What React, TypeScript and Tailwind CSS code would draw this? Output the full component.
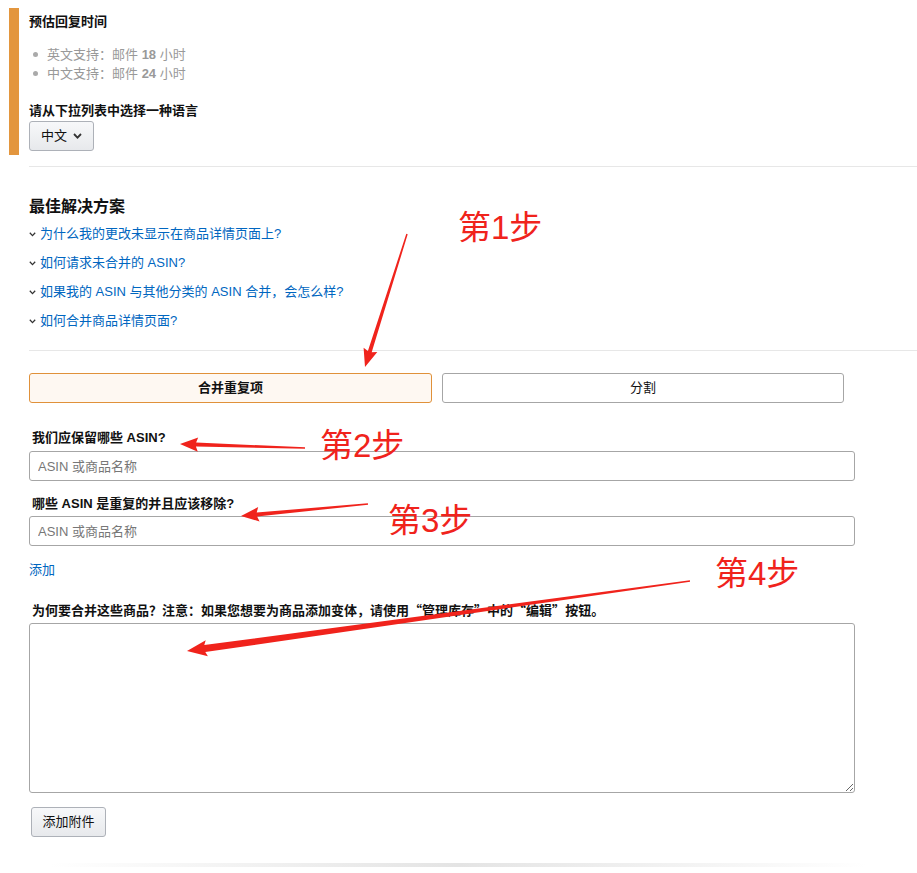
import React from "react"

const font = { fontFamily: '"Liberation Sans", "Noto Sans CJK SC", sans-serif' }
const cjk = { fontFamily: '"Noto Sans CJK SC", sans-serif' }

type Arrow = { x1: number; y1: number; x2: number; y2: number; w: number; head: number }

// tail (x1,y1) -> tip (x2,y2); shaft tapers from thin tail to w at the head
function arrowPoints({ x1, y1, x2, y2, w, head }: Arrow) {
  const dx = x2 - x1
  const dy = y2 - y1
  const len = Math.hypot(dx, dy)
  const ux = dx / len
  const uy = dy / len
  const nx = -uy
  const ny = ux
  const bx = x2 - ux * head
  const by = y2 - uy * head
  const hw = head * 0.45
  const pts = [
    [x1 + nx * 0.7, y1 + ny * 0.7],
    [bx + nx * (w / 2), by + ny * (w / 2)],
    [bx + nx * hw - ux * 2, by + ny * hw - uy * 2],
    [x2, y2],
    [bx - nx * hw - ux * 2, by - ny * hw - uy * 2],
    [bx - nx * (w / 2), by - ny * (w / 2)],
    [x1 - nx * 0.7, y1 - ny * 0.7],
  ]
  return pts.map((p) => `${p[0].toFixed(1)},${p[1].toFixed(1)}`).join(" ")
}

const arrows: Arrow[] = [
  { x1: 407, y1: 226, x2: 365, y2: 359, w: 4, head: 16 },
  { x1: 305, y1: 440, x2: 180, y2: 436, w: 4, head: 16 },
  { x1: 368, y1: 496, x2: 241, y2: 508, w: 4, head: 16 },
  { x1: 690, y1: 573, x2: 187, y2: 643, w: 7, head: 18 },
]

function LinkChevron() {
  return (
    <svg width="7" height="5" viewBox="0 0 7 5" className="mr-[4px] shrink-0">
      <path d="M0.8 0.8 L3.5 3.6 L6.2 0.8" fill="none" stroke="#333" strokeWidth="1.3" />
    </svg>
  )
}

const faq = [
  "为什么我的更改未显示在商品详情页面上?",
  "如何请求未合并的 ASIN?",
  "如果我的 ASIN 与其他分类的 ASIN 合并，会怎么样?",
  "如何合并商品详情页面?",
]

export default function App() {
  return (
    <div className="relative min-h-[873px] w-[917px] bg-white text-[13px] text-[#111]" style={font}>
      <div className="ml-[9px] mt-2 flex h-[147px] flex-col border-l-[10px] border-[#e3963e] pl-[10px] pt-[6px]">
        <h4 className="text-[13px] font-bold leading-4">预估回复时间</h4>
        <ul className="mt-[15px] text-[13px] leading-[19px] text-[#999]">
          <li className="flex items-center">
            <span className="ml-[4px] mr-[9px] inline-block h-[5px] w-[5px] rounded-full bg-[#aaa]" />
            英文支持：邮件&nbsp;<b>18</b>&nbsp;小时
          </li>
          <li className="flex items-center">
            <span className="ml-[4px] mr-[9px] inline-block h-[5px] w-[5px] rounded-full bg-[#aaa]" />
            中文支持：邮件&nbsp;<b>24</b>&nbsp;小时
          </li>
        </ul>
        <div className="mt-[20px] text-[13px] font-bold leading-4">请从下拉列表中选择一种语言</div>
        <button className="mt-[2px] flex h-[30px] w-[65px] items-center justify-center gap-[6px] rounded-[3px] border border-[#adb1b8] bg-gradient-to-b from-[#f7f8fa] to-[#e7e9ec] text-[13px] text-[#111]">
          中文
          <svg width="9" height="6" viewBox="0 0 9 6">
            <path d="M1 1 L4.5 4.6 L8 1" fill="none" stroke="#333" strokeWidth="1.8" />
          </svg>
        </button>
      </div>

      <div className="ml-[29px] mt-[11px] h-px bg-[#e7e7e7]" />

      <div className="pl-[29px]">
        <h3 className="mt-[30px] text-[16px] font-bold leading-5">最佳解决方案</h3>
        <div className="mt-[8px] flex flex-col gap-[11px]">
          {faq.map((q) => (
            <a key={q} className="flex items-center text-[13px] leading-[18px] text-[#0066c0]">
              <LinkChevron />
              {q}
            </a>
          ))}
        </div>
      </div>

      <div className="ml-[29px] mt-[20px] h-px bg-[#e7e7e7]" />

      <div className="pl-[29px]">
        <div className="mt-[22px] flex gap-[10px]">
          <button className="h-[30px] w-[403px] rounded-[3px] border border-[#e0913a] bg-[#fef8f2] text-[13px] font-bold text-[#111]">
            合并重复项
          </button>
          <button className="h-[30px] w-[402px] rounded-[3px] border border-[#a6a6a6] bg-white text-[13px] text-[#111]">
            分割
          </button>
        </div>

        <label className="mt-[27px] block pl-[3px] text-[13px] font-bold leading-4">我们应保留哪些 ASIN?</label>
        <input
          placeholder="ASIN 或商品名称"
          className="mt-[5px] h-[30px] w-[826px] rounded-[3px] border border-[#a6a6a6] px-[8px] text-[13px] placeholder:text-[#777]"
        />

        <label className="mt-[15px] block pl-[3px] text-[13px] font-bold leading-4">
          哪些 ASIN 是重复的并且应该移除?
        </label>
        <input
          placeholder="ASIN 或商品名称"
          className="mt-[4px] h-[30px] w-[826px] rounded-[3px] border border-[#a6a6a6] px-[8px] text-[13px] placeholder:text-[#777]"
        />

        <a className="mt-[16px] block text-[13px] leading-4 text-[#0066c0]">添加</a>

        <label className="mt-[24px] block pl-[3px] text-[13px] font-bold leading-4">
          为何要合并这些商品？注意：如果您想要为商品添加变体，请使用<span style={cjk}>“</span>管理库存
          <span style={cjk}>”</span>中的<span style={cjk}>“</span>编辑<span style={cjk}>”</span>按钮。
        </label>
        <textarea className="mt-[4px] block h-[170px] w-[826px] rounded-[3px] border border-[#a6a6a6]" />

        <button className="ml-[2px] mt-[14px] h-[30px] w-[75px] rounded-[3px] border border-[#adb1b8] bg-gradient-to-b from-[#f7f8fa] to-[#e7e9ec] text-[13px] text-[#111]">
          添加附件
        </button>
      </div>

      <div className="mx-[50px] mt-[26px] h-[4px] bg-gradient-to-r from-transparent via-[#e4e4e4] to-transparent" />

      {/* annotation overlay */}
      <svg className="pointer-events-none absolute left-0 top-0" width="917" height="873">
        {arrows.map((a, i) => (
          <polygon key={i} points={arrowPoints(a)} fill="#f0231c" />
        ))}
      </svg>
      <span className="absolute left-[458px] top-[200px] text-[33px] leading-10 text-[#f0231c]">第1步</span>
      <span className="absolute left-[320px] top-[418px] text-[33px] leading-10 text-[#f0231c]">第2步</span>
      <span className="absolute left-[388px] top-[493px] text-[33px] leading-10 text-[#f0231c]">第3步</span>
      <span className="absolute left-[715px] top-[546px] text-[33px] leading-10 text-[#f0231c]">第4步</span>
    </div>
  )
}
